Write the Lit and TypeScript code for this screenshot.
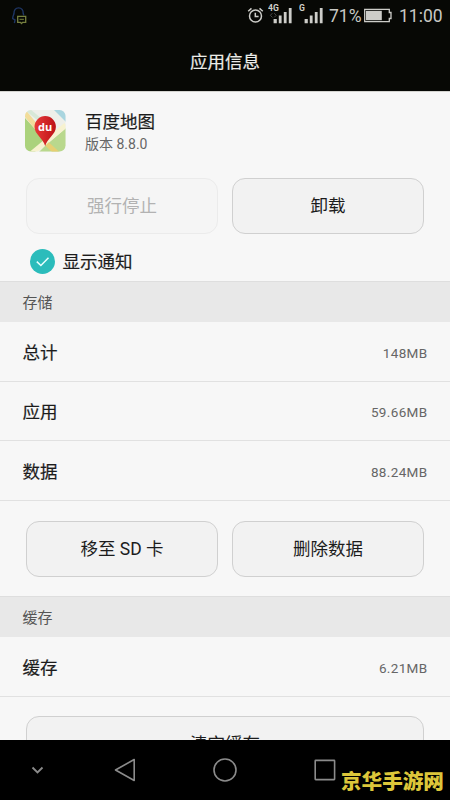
import { LitElement, html, css, svg } from "lit";
import { customElement, property } from "lit/decorators.js";

const signal = (label: string, data: boolean) => svg`
  <svg width="26" height="24" viewBox="0 0 26 24">
    <text x="0" y="11.4" font-size="8.6" font-weight="700" fill="#cfcfca"
      font-family="Roboto, sans-serif">${label}</text>
    ${data ? svg`<path d="M4.4 13.2 2.4 15.3 4.4 17.400M6.200 13.200 8.200 15.300 6.200 17.400" fill="none" stroke="#4a4a47" stroke-width="1"/>` : null}
    <path d="M5.6 19h3.2v4.3H5.6zM10.8 15.6h2.800v7.7h-2.800zM15.800 12h2.800v11.3h-2.800zM20.800 8h2.800v15.3h-2.800z" fill="#cdcdc9"/>
  </svg>`;

@customElement("status-bar")
class StatusBar extends LitElement {
  static styles = css`
    :host { display: flex; height: 32px; color: #c8c8c4; font: 17.5px/33px Roboto, sans-serif; }
    svg { display: block; flex: none; }
    .qq { margin: 5px auto 0 11px; }
    .alarm { margin: 6px 4px 0 0; }
    .pct { width: 32px; margin-left: 4px; white-space: nowrap; }
    .battery { margin: 8px 0 0 2px; }
    .time { width: 43px; margin: 0 8px 0 6px; white-space: nowrap; }
  `;
  render() {
    return html`
      <svg class="qq" width="17" height="20" viewBox="0 0 17 20" fill="none">
        <path d="M3.4 18.2 4 14.8 1.7 13.5C1.6 11.5 2.8 10 3 8.4 2.9 5 4.6 2.9 7.6 2.9s4.7 2.1 4.6 5.5l.6 2" stroke="#1e3564" stroke-width="1.4"/>
        <path d="M6.7 11.3h8v6h-3l-1.2 1.2-1.1-1.2H6.700z" stroke="#76803f" stroke-width="1.3"/>
        <path d="M8.500 14.300h4.400" stroke="#76803f" stroke-width="1"/>
      </svg>
      <svg class="alarm" width="17" height="18" viewBox="0 0 17 18" fill="none" stroke="#cdcdc9" stroke-width="1.500">
        <circle cx="8.500" cy="10" r="6"/><path d="M8.300 6.800v3.600h3.300M1.200 5.200 4.500 2.400M15.800 5.200 12.500 2.400"/>
      </svg>
      <svg width="57" height="24" viewBox="0 0 57 24">
        <g>${signal("4G", true)}</g>
        <g transform="translate(31 0)">${signal("G", false)}</g>
      </svg>
      <span class="pct">71%</span>
      <svg class="battery" width="30" height="15" viewBox="0 0 30 15">
        <path d="M1.700 1.300h24.600v3.200h1.700v6h-1.700v3.200H1.700z" fill="none" stroke="#cdcdc9" stroke-width="1.300"/>
        <path d="M3 2.800h15.800v9.400H3z" fill="#cdcdc9"/>
      </svg>
      <span class="time">11:00</span>`;
  }
}

@customElement("section-title")
class SectionTitle extends LitElement {
  static styles = css`
    :host {
      display: block; box-sizing: border-box; height: 41px; padding-left: 22.5px;
      background: #e8e8e8; border-top: 1px solid #dedede; color: #555;
      font-size: 15px; line-height: 42px;
    }
  `;
  render() { return html`<slot></slot>`; }
}

@customElement("info-row")
class InfoRow extends LitElement {
  @property() label = "";
  @property() value = "";
  static styles = css`
    :host {
      display: flex; justify-content: space-between; align-items: center;
      box-sizing: border-box; height: 59.500px; padding: 3px 22.500px 0;
      border-bottom: 1px solid #e1e1e1;
    }
    .label { font-size: 17.500px; line-height: 24px; color: #1c1c1c; -webkit-text-stroke: 0.200px #1c1c1c; }
    .value { font-size: 13.500px; line-height: 20px; color: #666; letter-spacing: 0.350px; }
  `;
  render() {
    return html`<span class="label">${this.label}</span><span class="value">${this.value}</span>`;
  }
}

@customElement("app-root")
class AppRoot extends LitElement {
  static styles = css`
    :host {
      display: flex; flex-direction: column; width: 450px; height: 800px; overflow: hidden;
      background: #f7f7f7; color: #1c1c1c;
      font-family: Roboto, "Noto Sans CJK SC", sans-serif;
    }
    svg { display: block; flex: none; }
    .head { flex: none; height: 91px; background: #070805; border-bottom: 1px solid #d4d4d0; }
    .title {
      color: #ecece8; font-size: 17.500px; line-height: 24px; margin-top: 18px; text-align: center;
      -webkit-text-stroke: 0.200px #ecece8;
    }
    .body { flex: 1; min-height: 0; overflow: hidden; }
    .app { display: flex; align-items: flex-start; height: 86px; }
    .logo { margin: 18px 19px 0 25px; }
    .name { font-size: 17.500px; line-height: 24px; margin-top: 18px; -webkit-text-stroke: 0.200px #1c1c1c; }
    .version { font-size: 14px; line-height: 20px; color: #666; }
    .pair { display: flex; gap: 14px; padding: 0 26px; }
    .btn {
      flex: 1; box-sizing: border-box; height: 56px; border: 1px solid #d0d0d0; border-radius: 13px;
      background: #f2f2f2; font-size: 17.500px; line-height: 55px; text-align: center;
    }
    .off { border-color: #ebebeb; background: #f5f5f5; color: #b2b2b2; }
    .notify {
      display: flex; align-items: center; height: 47px; padding: 7px 0 0 30px; gap: 7.500px;
      box-sizing: border-box; font-size: 17.500px; line-height: 24px;
    }
    .notify span { padding-top: 1px; -webkit-text-stroke: 0.200px #1c1c1c; }
    .storage { padding-top: 20px; padding-bottom: 19.500px; }
    .cache { padding-top: 19.500px; }
    .nav { flex: none; display: flex; height: 60px; background: #000; }
    .mark {
      width: 104px; margin: 27.500px 0 0 4px; color: #dcc63a; font-size: 20.600px; line-height: 28px;
      font-weight: 900; white-space: nowrap;
    }
  `;
  render() {
    return html`
      <div class="head">
        <status-bar></status-bar>
        <div class="title">应用信息</div>
      </div>
      <div class="body">
        <div class="app">
          <svg class="logo" width="41" height="42" viewBox="0 0 41 42">
            <defs>
              <clipPath id="tile"><rect width="40.500" height="41.500" rx="6"/></clipPath>
              <linearGradient id="pin" x1="0" y1="0" x2="1" y2="0">
                <stop offset="0" stop-color="#e73a36"/><stop offset="1" stop-color="#bd1217"/>
              </linearGradient>
            </defs>
            <g clip-path="url(#tile)">
              <rect width="41" height="42" fill="#eeefe9"/>
              <path d="M0 8 20 30 10 42H0z" fill="#abd27c"/>
              <path d="M0 3 22 30" stroke="#f2dd9a" stroke-width="5"/>
              <path d="M20 36 41 18V42H14z" fill="#b9d88d"/>
              <path d="M6 44 41 15" stroke="#f7f2cf" stroke-width="5"/>
              <path d="M22 34 33 44" stroke="#e6cf73" stroke-width="5"/>
              <path d="M29 0H41V12z" fill="#a9d5df"/>
              <path d="M3 0 14 9" stroke="#d7e8d7" stroke-width="4"/>
            </g>
            <path d="M20.200 36C18 28 9.500 24.500 9.500 16.800a10.700 10.700 0 0 1 21.400 0C30.900 24.500 22.400 28 20.200 36z" fill="url(#pin)"/>
            <text x="20.200" y="21.200" text-anchor="middle" font-family="Open Sans, sans-serif" font-size="11" font-weight="700" fill="#fff">du</text>
          </svg>
          <div>
            <div class="name">百度地图</div>
            <div class="version">版本 8.8.0</div>
          </div>
        </div>
        <div class="pair">
          <div class="btn off">强行停止</div>
          <div class="btn">卸载</div>
        </div>
        <div class="notify">
          <svg width="25" height="25" viewBox="0 0 25 25">
            <circle cx="12.500" cy="12.500" r="12.500" fill="#2bbcbb"/>
            <path d="M6.800 12.600 10.900 16.500 18.500 8.800" fill="none" stroke="#e9ffff" stroke-width="1.500"/>
          </svg>
          <span>显示通知</span>
        </div>
        <section-title>存储</section-title>
        <info-row label="总计" value="148MB"></info-row>
        <info-row label="应用" value="59.66MB"></info-row>
        <info-row label="数据" value="88.24MB"></info-row>
        <div class="pair storage">
          <div class="btn">移至 SD 卡</div>
          <div class="btn">删除数据</div>
        </div>
        <section-title>缓存</section-title>
        <info-row label="缓存" value="6.21MB"></info-row>
        <div class="pair cache">
          <div class="btn">清空缓存</div>
        </div>
      </div>
      <div class="nav">
        <svg width="337" height="60" viewBox="0 0 337 60" fill="none" stroke="#8b8b8b" stroke-width="1.600">
          <path d="M32.500 27.500 37.500 32.500 42.500 27.500" stroke-width="1.800"/>
          <path d="M134.200 19.500V40.500L115.500 30z" stroke-linejoin="round"/>
          <circle cx="225" cy="30" r="11"/>
          <rect x="315.200" y="20.400" width="19.400" height="19.200" rx=".5"/>
        </svg>
        <div class="mark">京华手游网</div>
      </div>`;
  }
}
